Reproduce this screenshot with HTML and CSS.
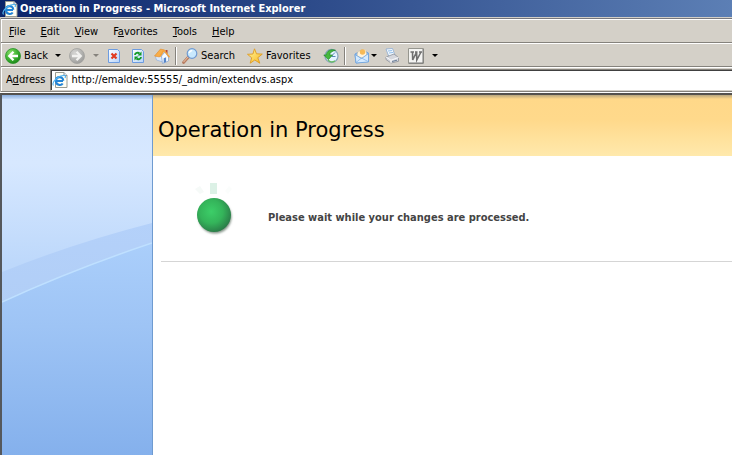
FILE: index.html
```html
<!DOCTYPE html>
<html lang="en">
<head>
<meta charset="utf-8">
<title>Operation in Progress</title>
<link rel="stylesheet" href="styles.css">
</head>
<body>
<svg class="defs" width="0" height="0" aria-hidden="true">
  <defs>
    <radialGradient id="green" cx=".35" cy=".3" r=".8"><stop offset="0" stop-color="#8be069"/><stop offset=".6" stop-color="#36ac2c"/><stop offset="1" stop-color="#177c17"/></radialGradient>
    <radialGradient id="grey" cx=".35" cy=".3" r=".8"><stop offset="0" stop-color="#d6d6d4"/><stop offset="1" stop-color="#989896"/></radialGradient>
    <linearGradient id="sheet" x2="1" y2="1"><stop offset="0" stop-color="#fff"/><stop offset="1" stop-color="#b5d3fa"/></linearGradient>
    <linearGradient id="gold" x2="1" y2="1"><stop offset="0" stop-color="#fff6a0"/><stop offset="1" stop-color="#f9b820"/></linearGradient>
    <symbol id="ie" viewBox="0 0 16 16">
      <path d="M3.500 .5H12l3 3v12H3.500z" fill="#fffef4" stroke="#9a9c92"/>
      <path d="M12 .5v3h3" fill="#dde6ee" stroke="#8a949c"/>
      <path d="M11 9H4.200M10.700 11.500C9 14 4 13.300 4 9c0-5 7.200-5.200 7.200-.2" fill="none" stroke="#2384d6" stroke-width="2.200"/>
      <path d="M1.500 13.500C-1 10 7 3 12.500 3.500c1.500.3 1 1.700.5 2.500" fill="none" stroke="#54b5ef" stroke-width="1.200"/>
    </symbol>
    <symbol id="caret" viewBox="0 0 6 3"><path d="M0 0h6L3 3z" fill="currentColor"/></symbol>
  </defs>
</svg>
<header class="titlebar">
  <svg class="icon" viewBox="0 0 16 16" aria-hidden="true"><use href="#ie"/></svg>
  <span>Operation in Progress - Microsoft Internet Explorer</span>
</header>
<div class="chrome">
  <nav class="menubar" aria-label="Menu">
    <button><u>F</u>ile</button>
    <button><u>E</u>dit</button>
    <button><u>V</u>iew</button>
    <button>F<u>a</u>vorites</button>
    <button><u>T</u>ools</button>
    <button><u>H</u>elp</button>
  </nav>
  <div class="toolbar">
    <button class="tool back">
      <svg class="icon" viewBox="0 0 16 16" aria-hidden="true"><circle cx="8" cy="8" r="7.500" fill="url(#green)" stroke="#2b9528" stroke-width=".8"/><path d="M13 8H5M8.500 3.800 4.300 8l4.200 4.200" fill="none" stroke="#fff" stroke-width="2.300"/></svg>
      <span>Back</span>
      <svg class="caret" aria-hidden="true"><use href="#caret"/></svg>
    </button>
    <button class="tool forward" aria-label="Forward" disabled>
      <svg class="icon" viewBox="0 0 16 16" aria-hidden="true"><circle cx="8" cy="8" r="7.500" fill="url(#grey)" stroke="#a1a19e" stroke-width=".8"/><path d="M3 8h8M7.500 3.800 11.700 8l-4.200 4.200" fill="none" stroke="#f2f2f0" stroke-width="2.300"/></svg>
      <svg class="caret" aria-hidden="true"><use href="#caret"/></svg>
    </button>
    <div class="group">
      <button class="tool" aria-label="Stop">
        <svg class="icon" viewBox="0 0 16 16" aria-hidden="true"><path d="M2.500 1.500h9l2 2v11h-11z" fill="url(#sheet)" stroke="#6d9ce0"/><path d="m5.500 5.500 5 5m0-5-5 5" stroke="#e13a20" stroke-width="2.200"/></svg>
      </button>
      <button class="tool" aria-label="Refresh">
        <svg class="icon" viewBox="0 0 16 16" aria-hidden="true"><path d="M2.500 1.500h9l2 2v11h-11z" fill="url(#sheet)" stroke="#6d9ce0"/><path d="M5 7c0-2 3-3 4.500-1.500M11 9c0 2-3 3-4.500 1.500" fill="none" stroke="#159a27" stroke-width="1.800"/><path d="M11.500 3.500v4h-4zM4.500 12.500v-4h4z" fill="#159a27"/></svg>
      </button>
      <button class="tool" aria-label="Home">
        <svg class="icon" viewBox="0 0 16 16" aria-hidden="true"><path d="M11.500 2h2v4h-2z" fill="#b84a32"/><path d="M1.500 8.500 7 4l2 10-6.500-2z" fill="#dceafd" stroke="#86a9dc" stroke-width=".6"/><path d="m7.500 8 3.500-4 3.500 5v4L8.500 15.500z" fill="#f7fbff" stroke="#7f9fcd" stroke-width=".7"/><path d="M.5 8 6.500 1 10 2 5.500 9z" fill="#f9ae48" stroke="#e08a2a" stroke-width=".6"/><path d="m6 8.500 4-6.300 5.500 7" fill="none" stroke="#f6a239" stroke-width="1.400"/><path d="m9.700 10.200 2.400-.9v4.600l-2.400 1z" fill="#5584c8"/></svg>
      </button>
    </div>
    <span class="separator"></span>
    <button class="tool search">
      <svg class="icon" viewBox="0 0 16 16" aria-hidden="true"><path d="m6.500 9-5 5.500" stroke="#b77d61" stroke-width="2.800" stroke-linecap="round"/><path d="m6.300 8.800-4.800 5.300" stroke="#efc6a8"/><circle cx="10" cy="5.500" r="4.800" fill="#c9e9fd" stroke="#719bd2" stroke-width="1.200"/><path d="M7.200 5c.4-1.700 1.600-2.500 3-2.300" fill="none" stroke="#fff" stroke-width="1.500"/></svg>
      <span>Search</span>
    </button>
    <button class="tool favorites">
      <svg class="icon" viewBox="0 0 16 16" aria-hidden="true"><path d="m7.500.8 2 5 5.800.3-4.500 3.600 2 5.500-5-3.200-4.600 3.200 1.500-5.400L.5 6.300 5.900 6z" fill="url(#gold)" stroke="#df9b21" stroke-width=".9"/></svg>
      <span>Favorites</span>
    </button>
    <button class="tool history" aria-label="History">
      <svg class="icon" viewBox="0 0 16 16" aria-hidden="true"><circle cx="8.500" cy="8" r="6.500" fill="#e6f4ff" stroke="#8aa7bd" stroke-width="1.300"/><path d="M8.500 8 12 4.500M8.500 8.500h4" stroke="#5886b5"/><path d="M12.500 2.300C8 .5 3.500 3 3.300 7H.8l4.500 4.700L9.500 7H6.700c.1-2.500 2.500-4 5.800-4.700z" fill="#45b83e" stroke="#218827" stroke-width=".7"/><path d="M5 12c2 2.400 5 2.500 7 .7" fill="none" stroke="#68bd62" stroke-width="1.400"/></svg>
    </button>
    <span class="separator"></span>
    <button class="tool mail" aria-label="Mail">
      <svg class="icon" viewBox="0 0 16 16" aria-hidden="true"><path d="M1 6 8 2l6.500 3v8.500L2 15z" fill="#8ebcef" stroke="#669bdc" stroke-width=".8"/><path d="M4 3.500 11.500 1.500 13 8l-5 2-5-2z" fill="#fff3dc" stroke="#dec496" stroke-width=".5"/><circle cx="8.500" cy="4" r="2.700" fill="#f7ba57"/><path d="m1 6.500 6.500 4 7-5v8.500L2 15z" fill="#d4eaff" stroke="#6aa1dc" stroke-width=".8"/><path d="m2 14.500 5.500-4.500 6.500 3.500" fill="none" stroke="#83b4e8" stroke-width=".8"/></svg>
      <svg class="caret" aria-hidden="true"><use href="#caret"/></svg>
    </button>
    <button class="tool print" aria-label="Print">
      <svg class="icon" viewBox="0 0 16 16" aria-hidden="true"><path d="m2 1 6.500-.5 2.500 7-6 1.500z" fill="#f4faff" stroke="#8cabd2" stroke-width=".8"/><path d="m4 3 4-.4M5 5l4-.5" stroke="#8fbce9"/><path d="m2 9 8-3 4.500 3.500v3.800L7 15l-5-3.500z" fill="#d5d7dd" stroke="#8c919b" stroke-width=".8"/><path d="m2 9 5 3.200 7.500-2.700M7 12.200V15" fill="none" stroke="#f9fafc"/><path d="m8 13.500 5-1.300" stroke="#697d98"/></svg>
    </button>
    <button class="tool edit" aria-label="Edit with Word">
      <svg class="icon" viewBox="0 0 16 16" aria-hidden="true"><path d="M.5.500h15v15H.5z" fill="#f4f4f2" stroke="#96968f"/><path d="M1 15h14V1" fill="none" stroke="#777"/><path d="M2.500 4H6M7 4h2.500M11 4h3M4.500 4l.2 8L8.600 4l.2 8L13 4" fill="none" stroke="#707070" stroke-width="1.600"/></svg>
      <svg class="caret" aria-hidden="true"><use href="#caret"/></svg>
    </button>
  </div>
  <form class="addressbar">
    <label for="address">A<u>d</u>dress</label>
    <div class="field">
      <svg class="icon" viewBox="0 0 16 16" aria-hidden="true"><use href="#ie"/></svg>
      <input id="address" type="text" value="http://emaldev:55555/_admin/extendvs.aspx">
    </div>
  </form>
</div>
<div class="page">
  <aside class="sidebar">
    <svg class="waves" viewBox="0 0 150 359" preserveAspectRatio="none" aria-hidden="true">
      <defs>
        <linearGradient id="sky" x2="0" y2="1"><stop offset="0" stop-color="#d2e5fe"/><stop offset=".18" stop-color="#d7e8ff"/><stop offset=".46" stop-color="#bdd8fb"/></linearGradient>
        <linearGradient id="band" gradientUnits="userSpaceOnUse" x1="0" y1="120" x2="0" y2="210"><stop offset="0" stop-color="#b4d1fa"/><stop offset="1" stop-color="#b1cef6"/></linearGradient>
        <linearGradient id="sea" gradientUnits="userSpaceOnUse" x1="0" y1="140" x2="0" y2="359"><stop offset="0" stop-color="#abcffb"/><stop offset=".4" stop-color="#9ec4f5"/><stop offset="1" stop-color="#84b0ec"/></linearGradient>
      </defs>
      <path d="M0 0h150v359H0z" fill="url(#sky)"/>
      <path d="M0 173Q72 144 150 124v235H0z" fill="url(#band)"/>
      <path d="M0 203Q72 170 150 144v215H0z" fill="url(#sea)"/>
      <path d="M0 203Q72 170 150 144" fill="none" stroke="#bfe0ff" stroke-width="1.500"/>
    </svg>
  </aside>
  <main class="content">
    <h1>Operation in Progress</h1>
    <section class="status">
      <svg class="spinner" viewBox="0 0 50 60" aria-hidden="true">
        <defs>
          <radialGradient id="ball" cx=".42" cy=".4" r=".62"><stop offset="0" stop-color="#3cce68"/><stop offset=".55" stop-color="#34b45a"/><stop offset="1" stop-color="#2a7c48"/></radialGradient>
          <filter id="soft" x="-20%" y="-20%" width="150%" height="150%"><feGaussianBlur stdDeviation="1"/></filter>
        </defs>
        <path d="M20 3h7v11h-7z" fill="#dcf1e6"/>
        <path d="m5 9 5-3 4 6-4 2z" fill="#f6faf8"/>
        <path d="m35 11 4-5 3 3-4 5z" fill="#fbfdfc"/>
        <circle cx="25" cy="37" r="16.500" fill="#849488" filter="url(#soft)"/>
        <circle cx="24" cy="35" r="17" fill="url(#ball)"/>
      </svg>
      <p>Please wait while your changes are processed.</p>
    </section>
  </main>
</div>
</body>
</html>
```
FILE: styles.css
```css
* {
  box-sizing: border-box;
}

body {
  display: flex;
  flex-direction: column;
  min-height: 100vh;
  margin: 0;
  background: #fff;
  color: #000;
  font: 11px/14px "DejaVu Sans Condensed", "DejaVu Sans", sans-serif;
}

.defs {
  position: absolute;
}

button,
input {
  margin: 0;
  padding: 0;
  border: 0;
  background: none;
  color: inherit;
  font: inherit;
}

.icon {
  display: block;
  flex: none;
  width: 16px;
  height: 16px;
}

.caret {
  flex: none;
  width: 6px;
  height: 3px;
}

.titlebar {
  display: flex;
  align-items: center;
  gap: 2px;
  height: 17px;
  padding: 0 2px;
  background: linear-gradient(90deg, #0a246a, #5c7fb5);
  color: #fff;
  font-weight: bold;
  white-space: nowrap;
}

.chrome {
  border-top: 1px solid #d4d0c8;
  border-left: 1px solid #b5b2ac;
  background: #d4d0c8;
  box-shadow: inset 0 1px #77777d, inset 0 2px #fff, inset 1px 0 #fff;
}

.menubar {
  display: flex;
  align-items: center;
  gap: 15px;
  height: 25px;
  padding: 3px 8px 0;
  border-bottom: 1px solid #85827c;
}

.toolbar {
  display: flex;
  align-items: center;
  height: 24px;
  padding: 1px 4px 0;
  border-top: 1px solid #fff;
  border-bottom: 1px solid #85827c;
}

.tool {
  display: flex;
  align-items: center;
  gap: 4px;
}

.back {
  gap: 3px;
}

.back .caret {
  margin-left: 4px;
}

.forward {
  gap: 8px;
  margin-left: 8px;
  color: #85827c;
}

.group {
  display: flex;
  gap: 8px;
  margin-left: 7px;
}

.separator {
  width: 2px;
  height: 18px;
  margin: 0 5px;
  border-left: 1px solid #85827c;
  border-right: 1px solid #fff;
}

.search {
  gap: 3px;
}

.favorites {
  gap: 3px;
  margin-left: 12px;
}

.history {
  margin-left: 12px;
}

.mail {
  gap: 1px;
  margin-left: 3px;
}

.print {
  margin-left: 7px;
}

.edit {
  gap: 8px;
  margin-left: 8px;
}

.addressbar {
  display: flex;
  align-items: center;
  gap: 5px;
  height: 25px;
  margin: 0;
  padding-left: 5px;
  border-top: 1px solid #fff;
  border-bottom: 1px solid #85827c;
}

.field {
  display: flex;
  flex: 1;
  align-items: center;
  gap: 3px;
  height: 22px;
  padding-left: 1px;
  border: solid #85827c;
  border-width: 1px 0 0 1px;
  border-bottom: 1px solid #d4d0c8;
  background: #fff;
  box-shadow: inset 1px 1px #404040;
}

.field input {
  flex: 1;
  outline: 0;
}

.page {
  display: flex;
  flex: 1;
  margin-top: 1px;
  border-top: 2px solid #55524e;
  border-left: 2px solid #55585c;
  box-shadow: 0 -1px #fff;
}

.sidebar {
  display: flex;
  flex: none;
  width: 151px;
  border-right: 1px solid #6f9bd0;
  background: linear-gradient(#8aaede, #d2e5fe 5px, #84b0ec);
}

.waves {
  display: block;
  width: 100%;
  margin-top: 4px;
}

.content {
  flex: 1;
  min-width: 0;
}

h1 {
  margin: 0;
  padding: 22px 5px 13px;
  background: linear-gradient(#b9a77f, #ffd889 4px, #ffd98b 25px, #ffe9ac);
  font-family: "DejaVu Sans", sans-serif;
  font-size: 21px;
  font-weight: normal;
  line-height: 26px;
}

.status {
  display: flex;
  align-items: center;
  gap: 28px;
  margin-left: 8px;
  padding: 24px 0 21px 29px;
  border-bottom: 1px solid #d5d5d5;
}

.spinner {
  flex: none;
  width: 50px;
  height: 60px;
}

.status p {
  margin: 16px 0 0;
  color: #444;
  font-weight: bold;
}
```
